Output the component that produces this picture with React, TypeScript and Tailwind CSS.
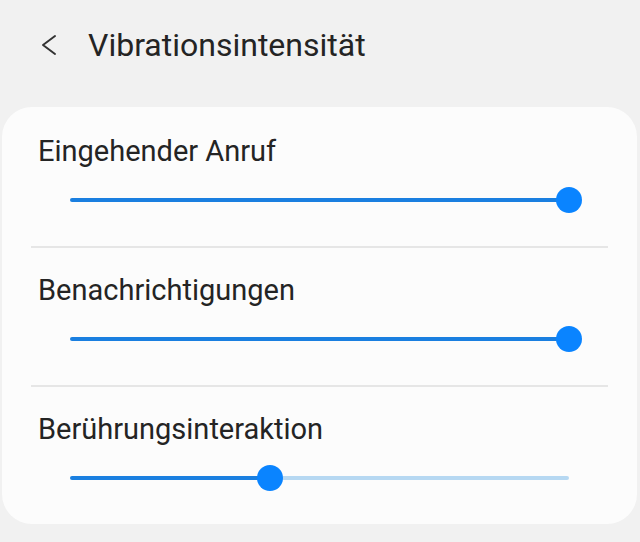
const rows = [
  { label: 'Eingehender Anruf', value: 100 },
  { label: 'Benachrichtigungen', value: 100 },
  { label: 'Berührungsinteraktion', value: 40 },
];

function Slider({ value }: { value: number }) {
  return (
    <div className="mx-[68px] flex h-[26px] items-center">
      <div className="h-[4px] basis-0 rounded-full bg-[#1a7fe0]" style={{ flexGrow: value }} />
      <div className="relative z-10 -mx-[13px] h-[26px] w-[26px] shrink-0 rounded-full bg-[#0a84ff]" />
      <div className="h-[4px] basis-0 rounded-full bg-[#b6d8f2]" style={{ flexGrow: 100 - value }} />
    </div>
  );
}

export default function App() {
  return (
    <div className="h-[542px] w-[640px] overflow-hidden bg-[#f1f1f1] font-['Roboto',sans-serif] text-[#242424]">
      {/* Header */}
      <div className="flex h-[90px] items-center pl-[34px]">
        <svg width="24" height="24" viewBox="0 0 24 24" className="shrink-0 text-[#333]">
          <path d="M21 3 L9 12 L21 21" fill="none" stroke="currentColor" strokeWidth="2" strokeLinecap="round" strokeLinejoin="round" />
        </svg>
        <h1 className="ml-[30px] text-[32px] leading-none">Vibrationsintensität</h1>
      </div>

      {/* Card */}
      <div className="ml-[2px] mr-[3px] mt-[17px] rounded-[30px] bg-[#fcfcfc]">
        {rows.map((row, i) => (
          <div key={i}>
            {i > 0 && <div className="mx-[29px] h-[2px] bg-[#e6e6e6]" />}
            <div className={i === 0 ? 'pt-[27px]' : 'pt-[25px]'}>
              <div className="pl-[36px] text-[29px] leading-[34px]">{row.label}</div>
              <div className="mt-[19px] pb-[33px]">
                <Slider value={row.value} />
              </div>
            </div>
          </div>
        ))}
      </div>
    </div>
  );
}
